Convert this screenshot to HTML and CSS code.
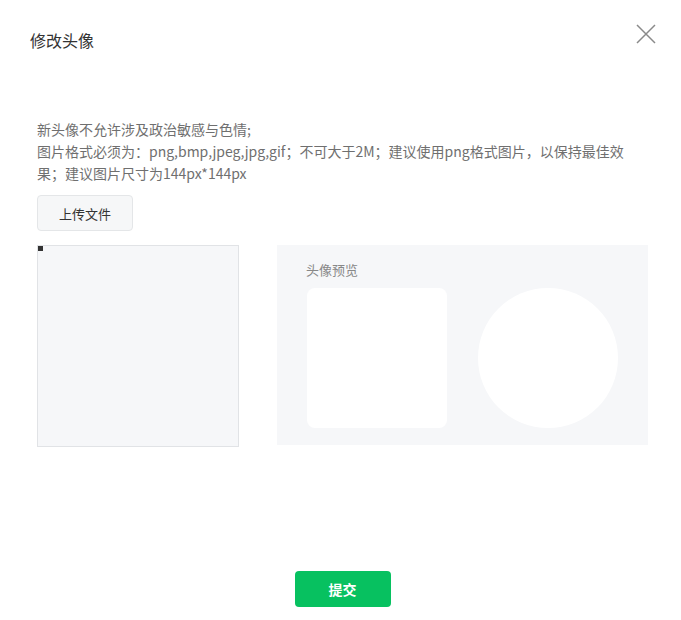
FILE: index.html
```
<!DOCTYPE html>
<html lang="zh-CN">
<head>
<meta charset="utf-8">
<title>修改头像</title>
<link rel="stylesheet" href="styles.css">
</head>
<body>
<div class="dialog">
  <div class="header">
    <div class="title">修改头像</div>
    <button class="close" aria-label="关闭">
      <svg width="20" height="20" viewBox="0 0 20 20"><path d="M1 1L19 19M19 1L1 19" stroke="#8a8a8a" stroke-width="1.5" fill="none"/></svg>
    </button>
  </div>
  <div class="body">
    <div class="tips">
      <p>新头像不允许涉及政治敏感与色情;</p>
      <p>图片格式必须为：png,bmp,jpeg,jpg,gif；不可大于2M；建议使用png格式图片，以保持最佳效果；建议图片尺寸为144px*144px</p>
    </div>
    <button class="upload">上传文件</button>
    <div class="row">
      <div class="crop"><span class="handle"></span></div>
      <div class="preview">
        <div class="label">头像预览</div>
        <div class="shapes">
          <div class="square"></div>
          <div class="circle"></div>
        </div>
      </div>
    </div>
  </div>
  <div class="footer">
    <button class="submit">提交</button>
  </div>
</div>
</body>
</html>
```
FILE: styles.css
```
* { box-sizing: border-box; }
html, body { margin: 0; padding: 0; background: #fff; }
body {
  font-family: "Noto Sans CJK SC", "Microsoft YaHei", sans-serif;
  color: #333;
  width: 681px;
  height: 620px;
  overflow: hidden;
}
.dialog { width: 681px; }
.header {
  display: flex;
  justify-content: space-between;
  align-items: flex-start;
  padding: 24px 25px 0 30px;
  height: 80px;
}
.title {
  font-size: 16px;
  line-height: 24px;
  margin-top: 4px;
  color: #333;
}
.close {
  border: 0;
  background: none;
  padding: 0;
  width: 20px;
  height: 20px;
  cursor: pointer;
}
.close svg { display: block; }
.body { padding: 38px 0 0 37px; }
.tips { width: 605px; font-size: 14px; line-height: 22px; color: #6f6f6f; }
.tips p { margin: 0; }
.upload {
  display: block;
  margin-top: 11px;
  width: 96px;
  height: 36px;
  border: 1px solid #e4e6e8;
  background: #f6f7f8;
  border-radius: 4px;
  font-family: inherit;
  font-size: 13px;
  color: #333;
  padding: 0;
}
.row {
  display: flex;
  gap: 38px;
  margin-top: 14px;
  align-items: flex-start;
}
.crop {
  position: relative;
  width: 202px;
  height: 202px;
  background: #f6f7f9;
  border: 1px solid #e1e3e6;
}
.handle {
  position: absolute;
  left: 0;
  top: 0;
  width: 5px;
  height: 5px;
  background: #333;
}
.preview {
  width: 371px;
  height: 200px;
  background: #f6f7f9;
  padding: 16px 30px 0 29px;
}
.label { font-size: 13px; line-height: 18px; color: #888; }
.shapes { display: flex; gap: 31px; margin-top: 9px; padding-left: 1px; }
.square { width: 140px; height: 140px; background: #fff; border-radius: 8px; }
.circle { width: 140px; height: 140px; background: #fff; border-radius: 50%; }
.footer {
  display: flex;
  justify-content: center;
  padding: 124px 0 0 4px;
}
.submit {
  width: 96px;
  height: 36px;
  border: 0;
  border-radius: 4px;
  background: #07c160;
  color: #fff;
  font-family: inherit;
  font-size: 14px;
  font-weight: bold;
  padding: 0;
}
```
